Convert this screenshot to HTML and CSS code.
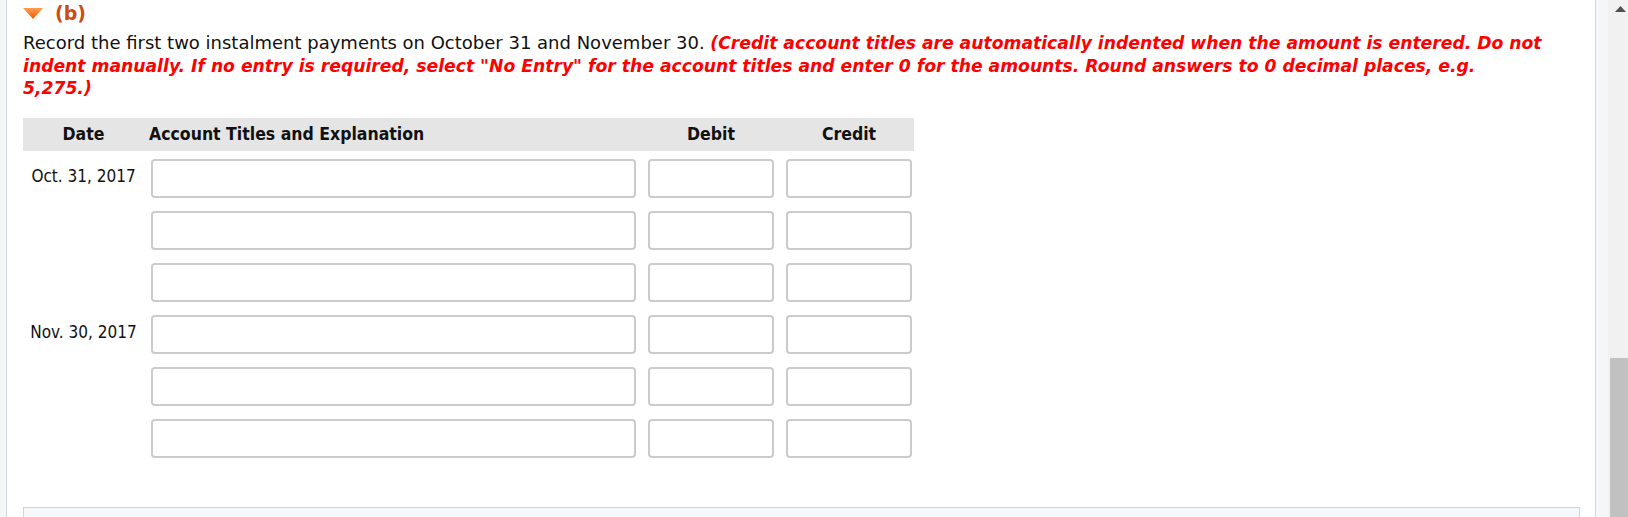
FILE: index.html
```html
<!DOCTYPE html>
<html lang="en">
<head>
    <meta charset="UTF-8">
    <meta name="viewport" content="width=device-width, initial-scale=1.0">
    <title>Journal entry (b)</title>
    <link rel="stylesheet" href="styles.css">
</head>
<body>

<div class="screen">
    <!-- question panel -->
    <main class="panel">
        <div class="part-title">
            <svg class="caret" width="20" height="11" viewBox="0 0 20 11">
                <defs>
                    <linearGradient id="caret-fill" x1="0" y1="0" x2="0" y2="1">
                        <stop offset="0" stop-color="#ff9d52"/>
                        <stop offset="1" stop-color="#ee5a00"/>
                    </linearGradient>
                </defs>
                <polygon points="0,0 20,0 10,11" fill="url(#caret-fill)"/>
            </svg>
            <span>(b)</span>
        </div>

        <p class="question">Record the first two instalment payments on October 31 and November 30. <span class="note">(Credit account titles are automatically indented when the amount is entered. Do not indent manually. If no entry is required, select "No Entry" for the account titles and enter 0 for the amounts. Round answers to 0 decimal places, e.g.<br>5,275.)</span></p>

        <!-- journal table -->
        <div class="journal">
            <div class="journal-head">
                <div class="col-date">Date</div>
                <div class="col-account">Account Titles and Explanation</div>
                <div>Debit</div>
                <div>Credit</div>
            </div>
            <div class="journal-body">
                <div class="journal-row">
                    <div class="col-date">Oct. 31, 2017</div>
                    <input class="field" type="text">
                    <input class="field" type="text">
                    <input class="field" type="text">
                </div>
                <div class="journal-row">
                    <div class="col-date"></div>
                    <input class="field" type="text">
                    <input class="field" type="text">
                    <input class="field" type="text">
                </div>
                <div class="journal-row">
                    <div class="col-date"></div>
                    <input class="field" type="text">
                    <input class="field" type="text">
                    <input class="field" type="text">
                </div>
                <div class="journal-row">
                    <div class="col-date">Nov. 30, 2017</div>
                    <input class="field" type="text">
                    <input class="field" type="text">
                    <input class="field" type="text">
                </div>
                <div class="journal-row">
                    <div class="col-date"></div>
                    <input class="field" type="text">
                    <input class="field" type="text">
                    <input class="field" type="text">
                </div>
                <div class="journal-row">
                    <div class="col-date"></div>
                    <input class="field" type="text">
                    <input class="field" type="text">
                    <input class="field" type="text">
                </div>
            </div>
        </div>

        <div class="next-part"></div>
    </main>

    <div class="gutter"></div>

    <!-- page scrollbar -->
    <div class="scrollbar">
        <div class="scroll-up">
            <svg width="11" height="6" viewBox="0 0 11 6"><polygon points="5.5,0 11,6 0,6" fill="#505050"/></svg>
        </div>
        <div class="scroll-thumb"></div>
    </div>
</div>

</body>
</html>
```

FILE: styles.css
```css
html, body {
    margin: 0;
    height: 100%;
    overflow: hidden;
}
body {
    background-color: #f4f7fa;
    font-family: "DejaVu Sans", Verdana, sans-serif;
    color: #111;
}
.screen {
    display: flex;
    height: 517px;
    padding-left: 6px;
}
.panel {
    box-sizing: border-box;
    width: 1590px;
    flex-shrink: 0;
    background-color: #fff;
    border-left: 1px solid #cfd7e1;
    border-right: 1px solid #cfd7e1;
    padding: 3px 15px 0 16px;
    overflow: hidden;
}
.gutter {
    width: 12px;
    flex-shrink: 0;
}
.scrollbar {
    width: 20px;
    flex-shrink: 0;
    background-color: #f1f1f1;
    display: flex;
    flex-direction: column;
}
.scroll-up {
    height: 358px;
    padding: 6px 0 0 7px;
    box-sizing: border-box;
}
.scroll-up svg {
    display: block;
}
.scroll-thumb {
    flex: 1;
    margin-left: 2px;
    background-color: #c1c1c1;
}

/* part heading */
.part-title {
    display: flex;
    align-items: center;
    gap: 12px;
    height: 20px;
    font-weight: bold;
    font-size: 19px;
    color: #c84e12;
}
.caret {
    display: block;
}

/* question text */
.question {
    margin: 9px 0 0;
    font-size: 18px;
    line-height: 21.5px;
}
.note {
    color: #ff0000;
    font-weight: bold;
    font-style: italic;
    font-size: 17.2px;
}

/* journal */
.journal {
    width: 891px;
    margin-top: 18px;
    font-family: "DejaVu Sans Condensed", "DejaVu Sans", sans-serif;
    font-stretch: condensed;
}
.journal-head,
.journal-row {
    display: grid;
    grid-template-columns: 116px 485px 126px 126px;
    column-gap: 12px;
    align-items: center;
}
.journal-head {
    height: 33px;
    background-color: #e5e5e5;
    font-weight: bold;
    font-size: 17.5px;
    text-align: center;
}
.journal-head .col-account {
    text-align: left;
    margin-left: -2px;
}
.col-date {
    text-align: center;
    padding-left: 5px;
}
.journal-body {
    display: flex;
    flex-direction: column;
    gap: 13px;
    padding-top: 8px;
}
.journal-row .col-date {
    font-size: 17px;
    padding-bottom: 4px;
}
.field {
    box-sizing: border-box;
    height: 39px;
    width: 100%;
    margin: 0;
    border: 2px solid #cbcbcb;
    border-radius: 4px;
    background-color: #fff;
    font-size: 16px;
}

/* next part, cut off at the bottom */
.next-part {
    height: 40px;
    margin-top: 49px;
    background-color: #f5f8fb;
    border: 1px solid #ccd5df;
}
```
